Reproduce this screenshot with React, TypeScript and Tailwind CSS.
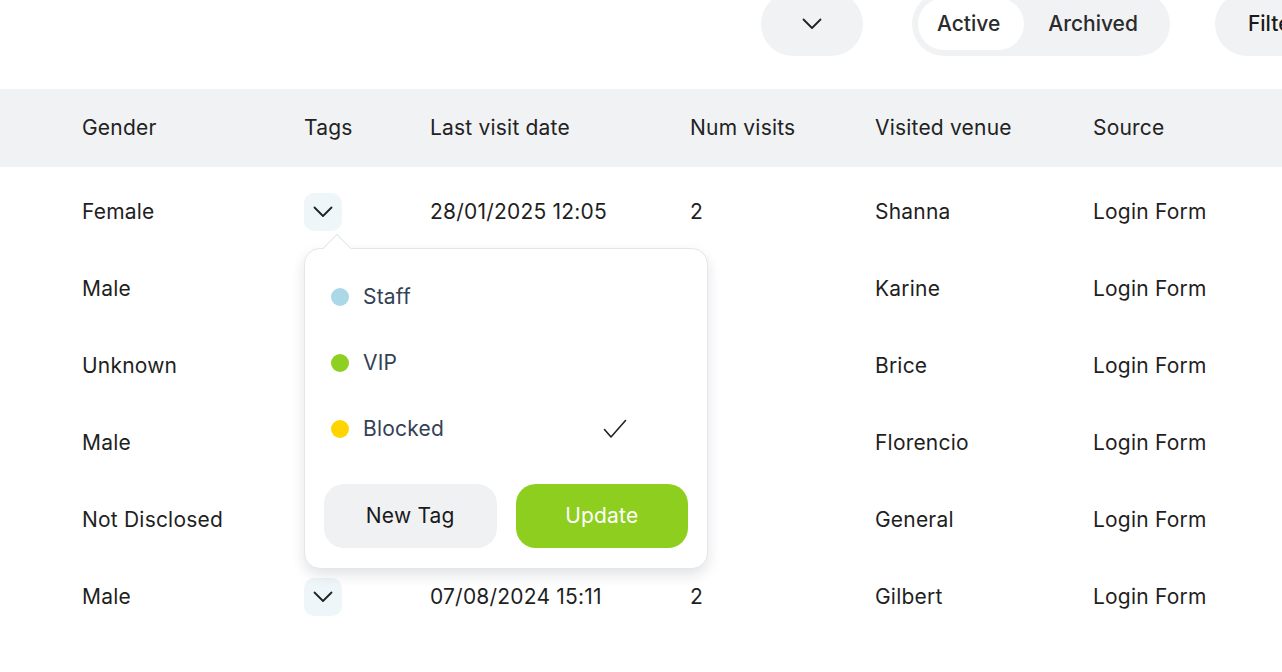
import React from "react";

const Chevron = ({ className = "" }: { className?: string }) => (
  <svg width="20" height="12" viewBox="0 0 20 12" fill="none" className={className}>
    <path d="M1.5 1.5 L10 10 L18.5 1.5" stroke="#222" strokeWidth="1.8" strokeLinecap="round" strokeLinejoin="round" />
  </svg>
);

const Check = () => (
  <svg width="24" height="20" viewBox="0 0 24 20" fill="none">
    <path d="M1.5 10.5 L8 18 L22.5 1.5" stroke="#222" strokeWidth="1.6" strokeLinecap="round" strokeLinejoin="round" />
  </svg>
);

type Row = { gender: string; date: string; num: string; venue: string; source: string };

const rows: Row[] = [
  { gender: "Female", date: "28/01/2025 12:05", num: "2", venue: "Shanna", source: "Login Form" },
  { gender: "Male", date: "", num: "", venue: "Karine", source: "Login Form" },
  { gender: "Unknown", date: "", num: "", venue: "Brice", source: "Login Form" },
  { gender: "Male", date: "", num: "", venue: "Florencio", source: "Login Form" },
  { gender: "Not Disclosed", date: "", num: "", venue: "General", source: "Login Form" },
  { gender: "Male", date: "07/08/2024 15:11", num: "2", venue: "Gilbert", source: "Login Form" },
];

const cols = "grid grid-cols-[222px_126px_260px_185px_218px_1fr] pl-[82px]";

const tags = [
  { name: "Staff", color: "bg-[#abd8e6]", checked: false },
  { name: "VIP", color: "bg-[#8fcf22]", checked: false },
  { name: "Blocked", color: "bg-[#ffd500]", checked: true },
];

function Popover() {
  return (
    <div className="absolute left-0 top-[55px] z-10 w-[404px] rounded-[16px] border border-[#e3e6ec] bg-white pt-[15px] pb-[20px] shadow-[0_6px_14px_rgba(15,23,42,0.12)]">
      <div className="absolute left-[22px] top-[-11px] h-5 w-5 rotate-45 border-l border-t border-[#e3e6ec] bg-white" />
      {tags.map((t) => (
        <div key={t.name} className="flex h-[66px] items-center pl-[26px]">
          <div className="flex w-[272px] items-center gap-[14px]">
            <span className={`h-[18px] w-[18px] rounded-full ${t.color}`} />
            <span className="text-[21px] tracking-[0.2px] text-[#334155]">{t.name}</span>
          </div>
          {t.checked && <Check />}
        </div>
      ))}
      <div className="mt-[22px] flex gap-[19px] px-[19px]">
        <button className="h-16 w-[173px] rounded-[20px] bg-[#f0f1f3] text-[21px] tracking-[0.2px] text-[#1a1a1a]">New Tag</button>
        <button className="h-16 w-[173px] rounded-[20px] bg-[#8dce1f] text-[21px] tracking-[0.2px] text-white">Update</button>
      </div>
    </div>
  );
}

export default function App() {
  return (
    <div
      className="relative h-[672px] w-[1282px] overflow-hidden bg-white text-[#1f1f1f]"
      style={{ fontFamily: "Inter, 'Noto Sans', sans-serif" }}
    >
      <div className="-mt-2 flex h-16 items-center whitespace-nowrap pl-[761px]">
        <button className="flex h-16 w-[102px] shrink-0 items-center justify-center rounded-full bg-[#f1f2f4]">
          <Chevron />
        </button>
        <div className="ml-[49px] flex h-16 shrink-0 items-center rounded-full bg-[#f1f2f4] p-[6px]">
          <span className="flex h-full items-center rounded-full bg-white pl-[19px] pr-[24px] text-[21px] font-medium text-[#2b2b2b]">Active</span>
          <span className="flex h-full items-center pl-[24px] pr-[26px] text-[21px] font-medium text-[#2b2b2b]">Archived</span>
        </div>
        <button className="ml-[45px] flex h-16 shrink-0 items-center rounded-full bg-[#f1f2f4] pl-[33px] pr-[33px] text-[21px] font-medium text-[#1a1a1a]">
          Filters
        </button>
      </div>

      <div className={`${cols} mt-[33px] h-[78px] items-center bg-[#f1f2f4] text-[21px] tracking-[0.2px] text-[#222]`}>
        <div>Gender</div>
        <div>Tags</div>
        <div>Last visit date</div>
        <div>Num visits</div>
        <div>Visited venue</div>
        <div>Source</div>
      </div>

      <div className="pt-[6px]">
        {rows.map((r, i) => (
          <div key={i} className={`${cols} h-[77px] items-center text-[21px] tracking-[0.2px] text-[#1f1f1f]`}>
            <div>{r.gender}</div>
            <div className="relative">
              <button className="flex h-[38px] w-[38px] items-center justify-center rounded-[10px] bg-[#eef6f9]">
                <Chevron />
              </button>
              {i === 0 && <Popover />}
            </div>
            <div>{r.date}</div>
            <div>{r.num}</div>
            <div>{r.venue}</div>
            <div>{r.source}</div>
          </div>
        ))}
      </div>
    </div>
  );
}
